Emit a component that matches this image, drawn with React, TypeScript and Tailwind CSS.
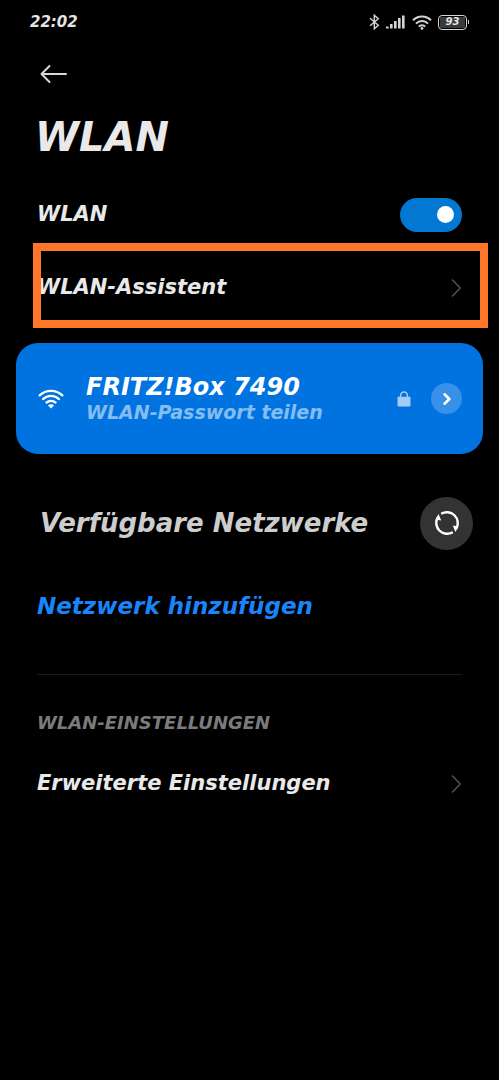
import { useState } from 'react'

function ArrowLeft() {
  return (
    <svg width="28" height="20" viewBox="0 0 28 20" fill="none" stroke="#d8d8d8" strokeWidth="2" strokeLinecap="round" strokeLinejoin="round">
      <path d="M9.5 2 1.5 10l8 8M1.5 10H26" />
    </svg>
  )
}

function ChevronRight() {
  return (
    <svg width="12" height="20" viewBox="0 0 12 20" fill="none" stroke="#5a5a5a" strokeWidth="1.3">
      <path d="M2 1.5 10.2 10 2 18.5" />
    </svg>
  )
}

function BluetoothIcon() {
  return (
    <svg width="11" height="16" viewBox="0 0 11 16" fill="none" stroke="#d4d4d4" strokeWidth="1.4">
      <path d="M1 4.3 9.3 11.2 5.3 14.8V1.2L9.3 4.8 1 11.7" />
    </svg>
  )
}

function SignalIcon() {
  return (
    <svg width="20" height="14" viewBox="0 0 20 14" fill="#d4d4d4">
      <rect x="0" y="11.5" width="2.6" height="2" />
      <rect x="4" y="9" width="2.6" height="4.5" />
      <rect x="8" y="6" width="2.6" height="7.5" />
      <rect x="12" y="3" width="2.6" height="10.5" />
      <rect x="16" y="0.5" width="2.6" height="13" />
    </svg>
  )
}

function StatusWifiIcon() {
  return (
    <svg width="20" height="15" viewBox="0 0 20 15" fill="none" stroke="#d4d4d4" strokeWidth="2">
      <path d="M1 5.4a12.4 12.4 0 0 1 18 0" />
      <path d="M4 8.6a8.2 8.2 0 0 1 12 0" />
      <path d="M6.8 11.6a4.4 4.4 0 0 1 6.4 0" />
      <circle cx="10" cy="13.4" r="1.4" fill="#d4d4d4" stroke="none" />
    </svg>
  )
}

function WifiIcon() {
  return (
    <svg width="26" height="20" viewBox="0 0 26 20" fill="none" stroke="#fff" strokeWidth="2.2" strokeLinecap="round">
      <path d="M1.6 6.4a16.4 16.4 0 0 1 22.8 0" />
      <path d="M5 10.1a11.6 11.6 0 0 1 16 0" />
      <path d="M8.4 13.6a6.8 6.8 0 0 1 9.2 0" />
      <path d="M13 19.4 10 16.5a4.2 4.2 0 0 1 6 0Z" fill="#fff" stroke="none" />
    </svg>
  )
}

function LockIcon() {
  return (
    <svg width="14" height="16" viewBox="0 0 14 16">
      <path d="M3.6 6.5V4.4a3.4 3.4 0 0 1 6.8 0v2.1" fill="none" stroke="#a3cbf5" strokeWidth="1.5" />
      <rect x="0.5" y="5.8" width="13" height="9.8" rx="1" fill="#a3cbf5" />
    </svg>
  )
}

function RefreshIcon() {
  return (
    <svg width="28" height="28" viewBox="0 0 28 28" fill="none" stroke="#fff" strokeWidth="2.4">
      <path d="M8.2 4.8A10.9 10.9 0 0 1 23.4 19.4" />
      <path d="M19.8 23.2A10.9 10.9 0 0 1 4.6 8.6" />
      <path d="M19.8 16.4 25.6 17.6 22.4 23Z" fill="#fff" stroke="none" />
      <path d="M8.2 11.6 2.4 10.4 5.6 5Z" fill="#fff" stroke="none" />
    </svg>
  )
}

function StatusBar() {
  return (
    <div className="flex h-11 items-center justify-between px-[30px] text-[#e4e4e4]">
      <span className="text-[15px]">22:02</span>
      <div className="flex items-center gap-[6px]">
        <BluetoothIcon />
        <SignalIcon />
        <StatusWifiIcon />
        <div className="flex items-center gap-px">
          <div className="flex h-[15px] w-[29px] items-center justify-center rounded-[4px] border-[1.5px] border-[#d4d4d4] p-px">
            <span className="flex h-full w-full items-center justify-center bg-[#3a3a3a] text-[10px] leading-none">93</span>
          </div>
          <div className="h-1 w-px bg-[#d4d4d4]" />
        </div>
      </div>
    </div>
  )
}

export default function App() {
  const [enabled, setEnabled] = useState(true)

  return (
    <div className="min-h-screen bg-black font-['DejaVu_Sans',sans-serif] font-bold text-[#e9e9e9] italic">
      <StatusBar />

      <div className="flex h-[60px] items-center pl-10">
        <button aria-label="Zurück">
          <ArrowLeft />
        </button>
      </div>

      <h1 className="mb-2 px-[35px] text-[40px] leading-[66px]">WLAN</h1>

      <label className="flex h-[73px] items-center justify-between px-[37px] text-[21px]">
        WLAN
        <input
          type="checkbox"
          role="switch"
          checked={enabled}
          onChange={(e) => setEnabled(e.target.checked)}
          className="flex h-[34px] w-[62px] appearance-none items-center rounded-full bg-[#3a3a3a] px-2 before:h-[17px] before:w-[17px] before:rounded-full before:bg-white checked:justify-end checked:bg-[#0278d2]"
        />
      </label>

      <div className="relative">
        <button className="flex h-[73px] w-full items-center justify-between px-[37px] text-[21px] italic">
          WLAN-Assistent
          <ChevronRight />
        </button>
        {/* highlight frame around the row */}
        <div className="pointer-events-none absolute -top-2 -bottom-1 right-[11px] left-[33px] border-8 border-[#ff7629]" />
      </div>

      <section className="mx-4 mt-[19px] flex h-[111px] items-center rounded-[22px] bg-[#0073e0] pr-[21px] pl-[22px] text-white">
        <WifiIcon />
        <div className="ml-[22px] flex-1">
          <div className="text-2xl leading-[26px]">FRITZ!Box 7490</div>
          <div className="text-[19px] leading-6 text-[#85bdf3]">WLAN-Passwort teilen</div>
        </div>
        <LockIcon />
        <button aria-label="Details" className="ml-5 flex h-[31px] w-[31px] items-center justify-center rounded-full bg-[#3890e8]">
          <svg width="10" height="14" viewBox="0 0 10 14" fill="none" stroke="#fff" strokeWidth="2.6" strokeLinecap="round" strokeLinejoin="round">
            <path d="M2.5 2.3 7.4 7l-4.9 4.7" />
          </svg>
        </button>
      </section>

      <div className="mt-4 flex h-[106px] items-center justify-between pr-[26px] pl-10">
        <h2 className="text-[26px] text-[#cdcdcd]">Verfügbare Netzwerke</h2>
        <button aria-label="Aktualisieren" className="flex h-[53px] w-[53px] shrink-0 items-center justify-center rounded-full bg-[#333]">
          <RefreshIcon />
        </button>
      </div>

      <button className="flex h-[60px] w-full items-center px-[37px] text-[23px] text-[#1a84fb] italic">
        Netzwerk hinzufügen
      </button>

      <hr className="mx-[37px] mt-[38px] border-[#1b1b1b]" />

      <h2 className="px-[37px] pt-9 pb-3 text-lg leading-6 text-[#7b7b7b]">WLAN-EINSTELLUNGEN</h2>

      <button className="flex h-[73px] w-full items-center justify-between px-[37px] text-[21px] italic">
        Erweiterte Einstellungen
        <ChevronRight />
      </button>
    </div>
  )
}
